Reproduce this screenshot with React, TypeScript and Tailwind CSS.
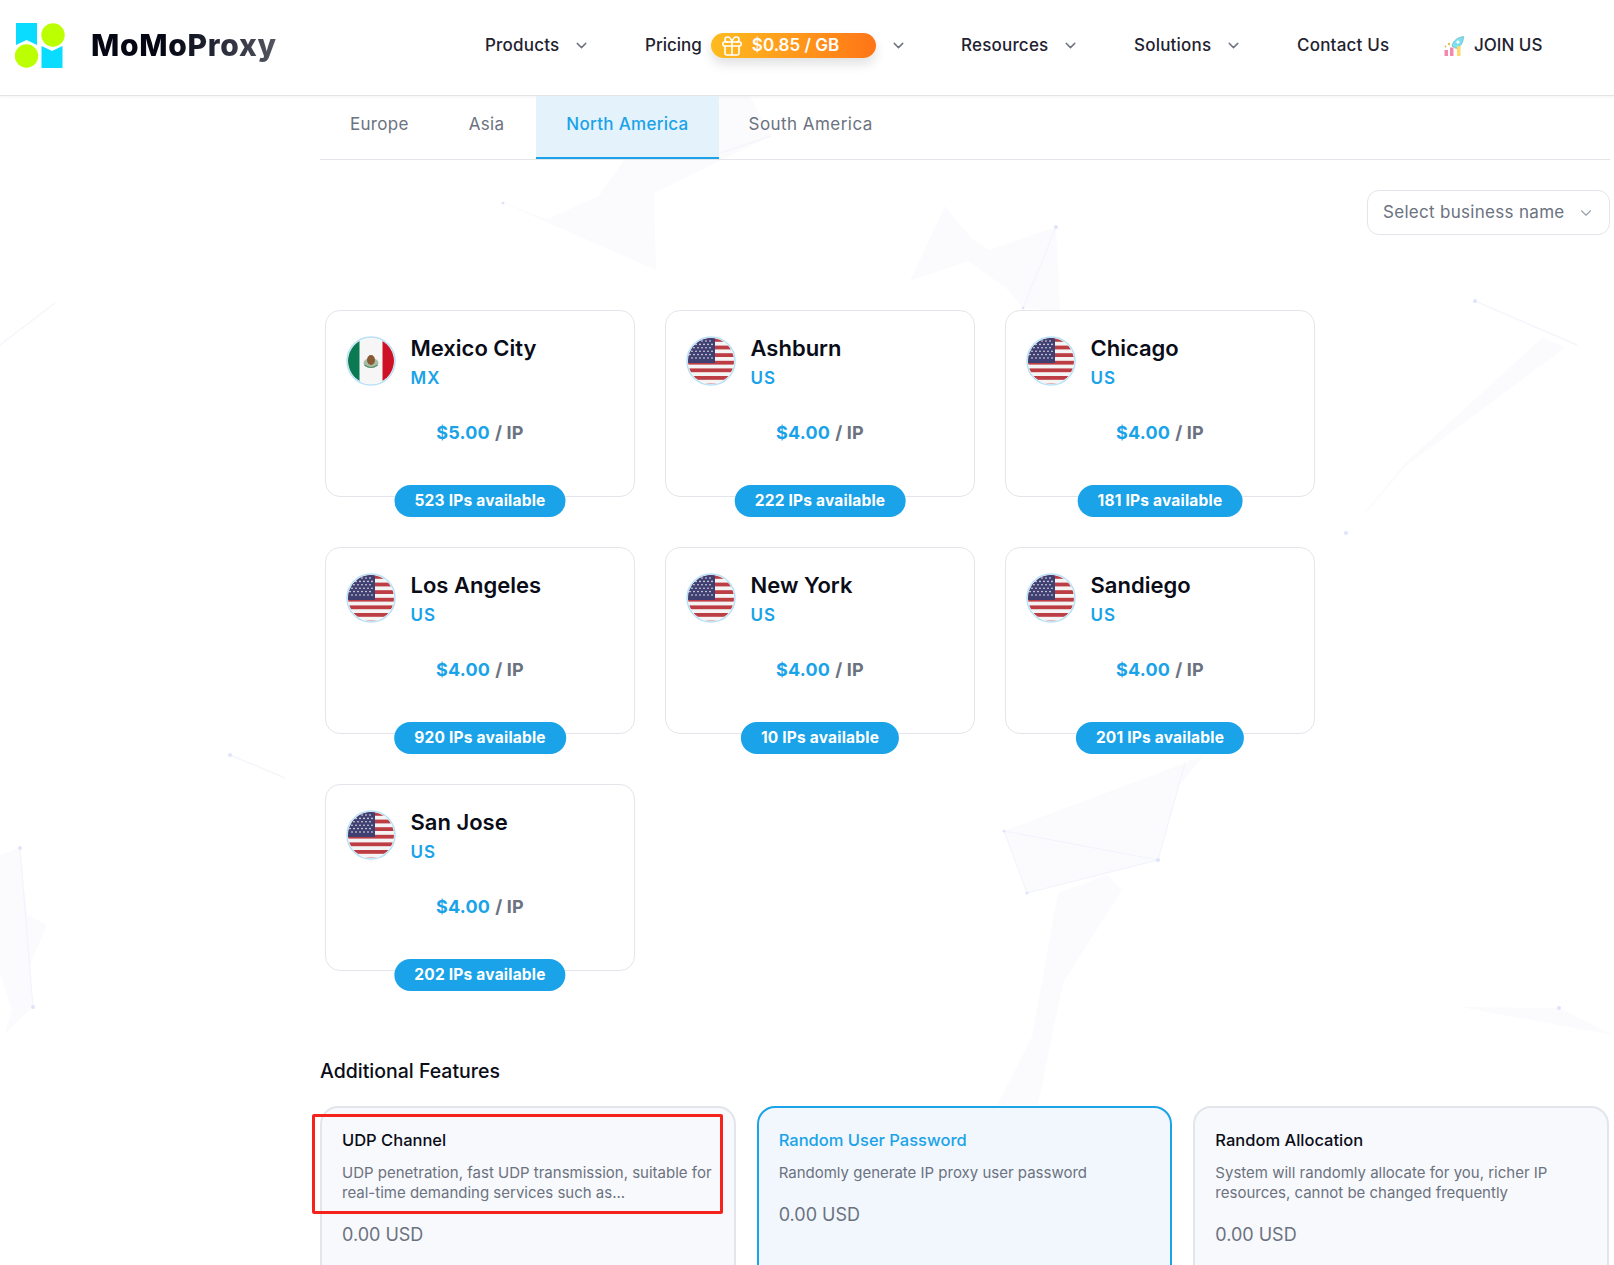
import { ChevronDown, Gift } from "lucide-react";

const CITIES = [
  { name: "Mexico City", code: "MX", price: "$5.00", ips: "523 IPs available" },
  { name: "Ashburn", code: "US", price: "$4.00", ips: "222 IPs available" },
  { name: "Chicago", code: "US", price: "$4.00", ips: "181 IPs available" },
  { name: "Los Angeles", code: "US", price: "$4.00", ips: "920 IPs available" },
  { name: "New York", code: "US", price: "$4.00", ips: "10 IPs available" },
  { name: "Sandiego", code: "US", price: "$4.00", ips: "201 IPs available" },
  { name: "San Jose", code: "US", price: "$4.00", ips: "202 IPs available" },
];

const FEATURES = [
  {
    title: "UDP Channel",
    desc: "UDP penetration, fast UDP transmission, suitable for real-time demanding services such as...",
    active: false,
  },
  { title: "Random User Password", desc: "Randomly generate IP proxy user password", active: true },
  {
    title: "Random Allocation",
    desc: "System will randomly allocate for you, richer IP resources, cannot be changed frequently",
    active: false,
  },
];

function Logo() {
  return (
    <svg width="52" height="48" viewBox="0 0 52 48" className="shrink-0">
      <path d="M1 1H22V23L11.5 18L1 23Z" fill="#0adcff" />
      <circle cx="38" cy="13" r="11.7" fill="#bcff00" />
      <circle cx="11.5" cy="34" r="11.7" fill="#bcff00" />
      <path d="M26.500 24L37 29L47.500 24V46H26.500Z" fill="#0adcff" />
    </svg>
  );
}

function UsFlag() {
  const stripes = [0, 1, 2, 3, 4, 5, 6];
  const dots: [number, number][] = [];
  for (let r = 0; r < 6; r++) {
    for (let c = 0; c < 6; c++) {
      dots.push([4 + c * 4 + (r % 2 ? 2 : 0), 5 + r * 3.4]);
    }
  }
  return (
    <svg width="50" height="50" viewBox="0 0 50 50" className="shrink-0">
      <defs>
        <clipPath id="us-clip">
          <circle cx="25" cy="25" r="23" />
        </clipPath>
      </defs>
      <g clipPath="url(#us-clip)">
        <rect width="50" height="50" fill="#f4f4f4" />
        {stripes.map((s) => (
          <rect key={s} x="0" y={2 + s * 7.6} width="50" height="3.800" fill="#bd3d44" />
        ))}
        <rect x="0" y="0" width="29" height="27" fill="#3f3f72" />
        {dots.map(([x, y]) => (
          <circle key={`${x}-${y}`} cx={x} cy={y} r="0.800" fill="#f2f2f6" />
        ))}
      </g>
      <circle cx="25" cy="25" r="24" fill="none" stroke="#b9e1f6" strokeWidth="1.500" />
    </svg>
  );
}

function MxFlag() {
  return (
    <svg width="50" height="50" viewBox="0 0 50 50" className="shrink-0">
      <defs>
        <clipPath id="mx-clip">
          <circle cx="25" cy="25" r="23" />
        </clipPath>
      </defs>
      <g clipPath="url(#mx-clip)">
        <rect width="50" height="50" fill="#f6f6f6" />
        <rect x="0" width="13.500" height="50" fill="#0b7a53" />
        <rect x="36.500" width="13.500" height="50" fill="#ce1126" />
        <ellipse cx="25" cy="27" rx="7.500" ry="5" fill="#a8bda5" />
        <ellipse cx="25" cy="24" rx="4" ry="5" fill="#8a5a34" />
        <path d="M18.500 29Q25 34 31.500 29" fill="none" stroke="#5b8f6b" strokeWidth="1.200" />
      </g>
      <circle cx="25" cy="25" r="24" fill="none" stroke="#b9e1f6" strokeWidth="1.500" />
    </svg>
  );
}

function JoinIcon() {
  return (
    <svg width="22" height="22" viewBox="0 0 22 22" className="shrink-0">
      <path d="M9 11C10 6 14 2.500 20.500 1.500C20.500 8 17 12 13 13.500Z" fill="#7ee0ee" stroke="#55a8b8" strokeWidth="0.600" />
      <circle cx="15" cy="7" r="1.600" fill="#fff" />
      <rect x="1.500" y="15" width="3.500" height="6" fill="#f487ad" />
      <rect x="7" y="12.500" width="3.500" height="8.500" fill="#f487ad" />
      <rect x="14" y="11" width="3.500" height="10" fill="#fbdc6a" />
      <circle cx="6" cy="9" r="1.200" fill="#e5c04f" />
      <circle cx="2.500" cy="11.500" r="0.900" fill="#d9b95c" />
    </svg>
  );
}

function NavItem({ label, className }: { label: string; className: string }) {
  return (
    <div className={`flex items-center ${className}`}>
      <span className="text-[17px] font-medium tracking-[0.2px] text-[#1f2230]">{label}</span>
      <ChevronDown className="ml-[14px] h-[17px] w-[17px] text-[#6f7480]" />
    </div>
  );
}

// faint triangle mesh behind the page
function BackgroundMesh() {
  return (
    <svg className="absolute inset-0" width="1614" height="1265" viewBox="0 0 1614 1265">
      <g fill="#fbfbfe">
        <path d="M503 203L656 270L654 193L771 136L750 96L641 96L631 150L599 196L547 219Z" />
        <path d="M945 206L972 239L989 250L1056 227L1060 311L1023 308L1006 288L968 261L910 281Z" />
        <path d="M1004 831L1185 763L1158 860L1027 893Z" />
        <path d="M1185 763L1205 754L1180 785Z" />
        <path d="M1058 893L1107 875L1122 890L1063 983L1038 1105L997 1105L1032 1037L1047 953Z" />
        <path d="M1543 337L1565 348L1407 465L1348 533L1405 463Z" />
        <path d="M0 855L20 848L27 915L47 925L30 965L33 1007L5 1033L12 1010L0 973Z" />
        <path d="M1460 1007L1559 1008L1614 1035Z" />
      </g>
      <g fill="none" stroke="#f5f6fb" strokeWidth="1.500">
        <path d="M1475 301L1577 345" />
        <path d="M0 345L55 303" />
        <path d="M230 755L285 778" />
        <path d="M771 136L700 160" />
      </g>
      <g fill="none" stroke="#f1f3fd">
        <path d="M1004 831L1158 860L1185 763M1158 860L1027 893L1004 831" />
        <path d="M1056 227L1023 308" />
        <path d="M20 848L33 1007" />
      </g>
      <g fill="#dfe4fb">
        <circle cx="1056" cy="227" r="2" />
        <circle cx="1023" cy="308" r="1.500" />
        <circle cx="1475" cy="301" r="2" />
        <circle cx="1346" cy="533" r="2" />
        <circle cx="1158" cy="860" r="2" />
        <circle cx="1004" cy="831" r="1.500" />
        <circle cx="1027" cy="893" r="1.500" />
        <circle cx="20" cy="848" r="2" />
        <circle cx="33" cy="1007" r="2" />
        <circle cx="230" cy="755" r="2" />
        <circle cx="1559" cy="1008" r="2" />
        <circle cx="503" cy="203" r="1.500" />
      </g>
    </svg>
  );
}

export default function App() {
  return (
    <div className="relative h-[1265px] w-[1614px] overflow-hidden bg-white font-['Inter',sans-serif]">
      <BackgroundMesh />

      <header className="relative flex h-[96px] items-center border-b border-[#e3e4e8] bg-white pb-[4px] shadow-[0_1px_3px_rgba(0,0,0,0.05)]">
        <div className="ml-[15px] flex w-[470px] items-center">
          <Logo />
          <span className="ml-[24px] text-[30px] font-extrabold tracking-[0.7px] bg-gradient-to-r from-[#050814] from-40% to-[#555762] bg-clip-text text-transparent">
            MoMoProxy
          </span>
        </div>
        <NavItem label="Products" className="w-[160px]" />
        <div className="flex w-[316px] items-center">
          <span className="text-[17px] font-medium text-[#1f2230]">Pricing</span>
          <div className="ml-[9px] flex h-[25px] w-[165px] items-center rounded-full bg-gradient-to-r from-[#fdbb1f] to-[#ff7417] pl-[9px] shadow-[0_6px_12px_rgba(0,0,0,0.12)]">
            <Gift className="h-[24px] w-[24px] text-white" strokeWidth={1.6} />
            <span className="ml-[8px] text-[17px] font-semibold text-white">$0.85 / GB</span>
          </div>
          <ChevronDown className="ml-[14px] h-[17px] w-[17px] text-[#6f7480]" />
        </div>
        <NavItem label="Resources" className="w-[173px]" />
        <NavItem label="Solutions" className="w-[163px]" />
        <span className="w-[146px] text-[17px] font-medium tracking-[0.2px] text-[#1f2230]">Contact Us</span>
        <div className="flex items-center gap-[9px]">
          <JoinIcon />
          <span className="text-[17px] font-medium text-[#1f2230]">JOIN US</span>
        </div>
      </header>

      <main className="relative ml-[320px] mr-[4px]">
        <nav className="flex h-[64px] border-b border-[#e3e5ea] tracking-[0.3px]">
          <div className="flex items-center px-[30px] pb-[6px] text-[17px] text-[#6b7280]">Europe</div>
          <div className="flex items-center pl-[30px] pr-[32px] pb-[6px] text-[17px] text-[#6b7280]">Asia</div>
          <div className="flex items-center border-b-2 border-[#1aa3e8] bg-[#e4f2fb] px-[30px] pb-[4px] text-[17px] font-medium text-[#1aa3e8]">
            North America
          </div>
          <div className="flex items-center px-[30px] pb-[6px] text-[17px] tracking-[0.45px] text-[#6b7280]">South America</div>
        </nav>

        <div className="mt-[30px] flex justify-end">
          <div className="flex h-[45px] w-[243px] items-center justify-between rounded-[12px] border border-[#e3e5ea] bg-white pl-[15px] pr-[14px] text-[17px] tracking-[0.3px] text-[#6b7280]">
            Select business name
            <ChevronDown className="h-[18px] w-[18px] text-[#9aa0aa]" strokeWidth={1.5} />
          </div>
        </div>

        <div className="ml-[5px] mt-[75px] grid w-[990px] grid-cols-3 gap-x-[30px] gap-y-[50px]">
          {CITIES.map((c) => (
            <div key={c.name} className="relative h-[187px] rounded-[15px] border border-[#e3e5ea]">
              <div className="flex pl-[20px] pt-[25px]">
                {c.code === "MX" ? <MxFlag /> : <UsFlag />}
                <div className="-mt-[1px] ml-[14.5px]">
                  <div className="text-[22px] font-semibold leading-[26px] text-[#0a0d18]">{c.name}</div>
                  <div className="mt-[6px] text-[17px] font-semibold leading-[22px] tracking-[1px] text-[#1aa3e8]">{c.code}</div>
                </div>
              </div>
              <div className="mt-[31px] text-center text-[18px] font-bold leading-[26px] tracking-[0.2px] text-[#6b7280]">
                <span className="text-[#1aa3e8]">{c.price}</span>
                <span className="ml-[5px]">/ IP</span>
              </div>
              <div className="absolute bottom-[-21px] left-1/2 flex h-[32px] -translate-x-1/2 items-center whitespace-nowrap rounded-full bg-[#1aa3e8] px-[20px] text-[15.500px] font-bold tracking-[0.2px] text-white">
                {c.ips}
              </div>
            </div>
          ))}
        </div>

        <h2 className="mt-[86px] text-[19.500px] font-medium leading-[28px] text-[#0a0d18]">Additional Features</h2>

        <div className="relative mt-[21px] grid w-[1289px] grid-cols-3 gap-x-[21px]">
          {FEATURES.map((f) => (
            <div
              key={f.title}
              className={
                f.active
                  ? "h-[180px] rounded-[18px] border-2 border-[#1aa3e8] bg-[#f2f7fe] px-[20px] pt-[20px]"
                  : "h-[180px] rounded-[18px] border-2 border-[#e3e5ec] bg-[#f8f9fc] px-[20px] pt-[20px]"
              }
            >
              <div className={f.active ? "text-[16.500px] font-medium leading-[24px] text-[#1aa3e8]" : "text-[16.500px] font-medium leading-[24px] text-[#0a0d18]"}>
                {f.title}
              </div>
              <p className="mt-[11px] text-[15px] leading-[20px] text-[#6b7280]">{f.desc}</p>
              <div className="mt-[20px] text-[18px] leading-[24px] text-[#6b7280]">0.00 USD</div>
            </div>
          ))}
          {/* red annotation box over the first card */}
          <div className="absolute left-[-8px] top-[8px] h-[100px] w-[411px] rounded-[2px] border-[3px] border-[#f5231c]" />
        </div>
      </main>
    </div>
  );
}
